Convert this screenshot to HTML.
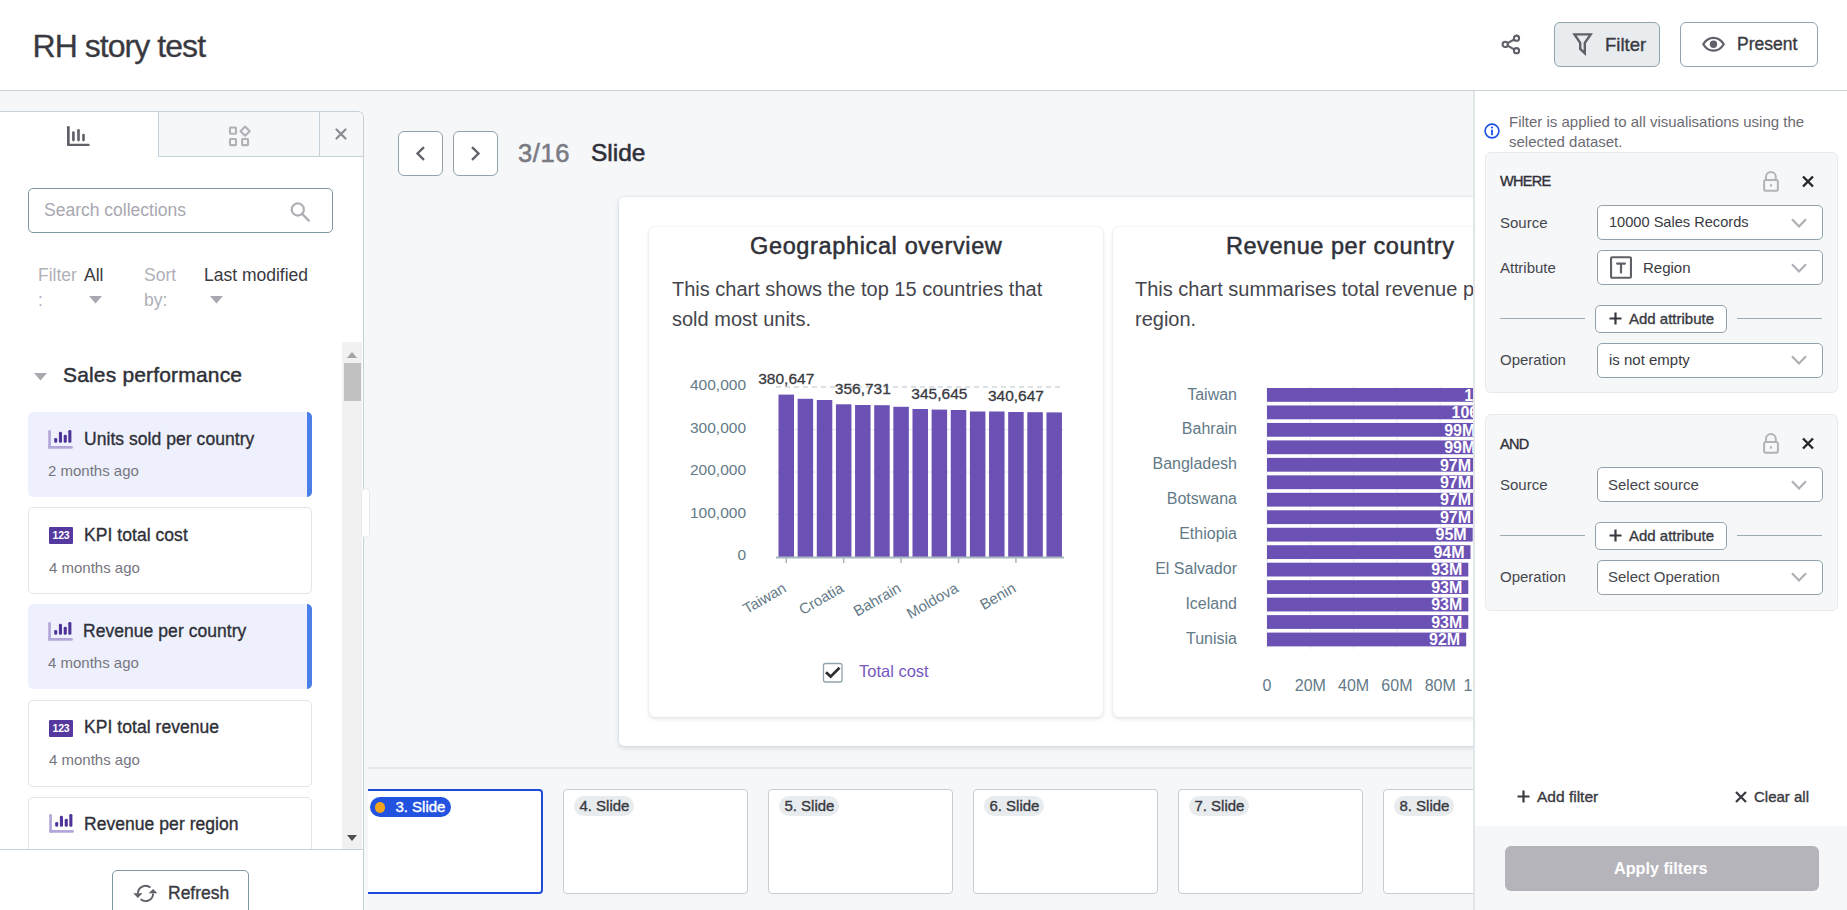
<!DOCTYPE html>
<html><head><meta charset="utf-8">
<style>
*{box-sizing:border-box;margin:0;padding:0}
html,body{width:1847px;height:910px;overflow:hidden;background:#f5f7f9;font-family:"Liberation Sans",sans-serif;color:#393a41}
.abs{position:absolute}
.t{position:absolute;white-space:nowrap;line-height:1}
#header{position:absolute;left:0;top:0;width:1847px;height:91px;background:#fff;border-bottom:1px solid #c9d4da}
.btn{position:absolute;border:1px solid #8fa4ae;border-radius:6px;background:#fff}
svg{position:absolute;overflow:visible}
.m{-webkit-text-stroke:0.35px currentColor}
.sel{background:#fff;border:1px solid #8ea2ad;border-radius:5px}
.addb{background:#fff;border:1px solid #8ea2ad;border-radius:5px}
</style></head><body>

<!-- HEADER -->
<div id="header">
  <div class="t m" style="left:32.5px;top:29.5px;font-size:32px;letter-spacing:-0.95px;color:#393a41;-webkit-text-stroke:0.3px #393a41">RH story test</div>
  <!-- share -->
  <svg style="left:1500px;top:33px" width="22" height="22" viewBox="0 0 22 22">
    <g fill="none" stroke="#5f6068" stroke-width="2.1">
      <circle cx="16.5" cy="5.2" r="2.6"/><circle cx="5.2" cy="11.4" r="2.6"/><circle cx="16.5" cy="17.7" r="2.6"/>
      <path d="M7.5 10.1L14.2 6.5M7.5 12.7L14.2 16.4"/>
    </g>
  </svg>
  <div class="btn" style="left:1554px;top:22px;width:106px;height:45px;background:#e8ecef"></div>
  <svg style="left:1572px;top:33px" width="22" height="23" viewBox="0 0 22 23">
    <path d="M2.5 1.4H18.7L12.8 9.8V20.3L8.2 16V9.8Z" fill="none" stroke="#5f6068" stroke-width="2.4" stroke-linejoin="miter"/>
  </svg>
  <div class="t m" style="left:1605px;top:36px;font-size:18.5px;color:#393a41">Filter</div>
  <div class="btn" style="left:1680px;top:22px;width:138px;height:45px"></div>
  <svg style="left:1702px;top:36px" width="24" height="17" viewBox="0 0 24 17">
    <path d="M1.3 8.3C4 3.7 7.8 1.9 11.5 1.9S19 3.7 21.7 8.3C19 12.9 15.2 14.7 11.5 14.7S4 12.9 1.3 8.3Z" fill="none" stroke="#5f6068" stroke-width="2.2"/>
    <circle cx="11.5" cy="8.3" r="3.7" fill="#5f6068"/>
  </svg>
  <div class="t m" style="left:1737px;top:36px;font-size:17.5px;color:#393a41">Present</div>
</div>

<!-- LEFT PANEL -->
<div id="left" class="abs" style="left:0;top:111px;width:364px;height:799px;background:#fff;border:1px solid #c5d1d8;border-left:none;border-bottom:none;border-top-right-radius:6px;overflow:hidden">
  <!-- tabs (coords relative to panel: top=111) -->
  <div class="abs" style="left:158px;top:0;width:205px;height:45px;background:#f5f7f9;border-left:1px solid #c5d1d8;border-bottom:1px solid #c5d1d8"></div>
  <div class="abs" style="left:319px;top:0;width:1px;height:45px;background:#c5d1d8"></div>
  <svg style="left:67px;top:14px" width="23" height="21" viewBox="0 0 23 21">
    <g fill="#5f6068"><rect x="0" y="0" width="2.7" height="20" rx="1.2"/><rect x="0" y="17.8" width="22.7" height="2.3" rx="1.1"/>
    <rect x="5.1" y="5.2" width="2.6" height="10.2" rx="1.3"/><rect x="10.2" y="2.9" width="2.6" height="12.5" rx="1.3"/><rect x="15.2" y="7.8" width="2.6" height="7.6" rx="1.3"/></g>
  </svg>
  <svg style="left:229px;top:14px" width="22" height="22" viewBox="0 0 22 22">
    <g fill="none" stroke="#b1b1b7" stroke-width="2.1" stroke-linejoin="round">
      <rect x="1" y="1.5" width="6" height="6.2" rx="0.6"/><rect x="1" y="13" width="6" height="6.1" rx="0.6"/><rect x="13.1" y="13" width="5.9" height="6.1" rx="0.6"/>
      <path d="M16.1 0.6L20.7 5.2L16.1 9.8L11.5 5.2Z"/>
    </g>
  </svg>
  <svg style="left:335px;top:16px" width="12" height="12" viewBox="0 0 12 12">
    <path d="M1.5 1.5L10.5 10.5M10.5 1.5L1.5 10.5" stroke="#8a8b93" stroke-width="2.2" stroke-linecap="round" fill="none"/>
  </svg>
  <!-- search -->
  <div class="abs" style="left:28px;top:75.5px;width:305px;height:45px;border:1px solid #7e98a5;border-radius:5px"></div>
  <div class="t" style="left:44px;top:90px;font-size:17.5px;color:#a8a8b0">Search collections</div>
  <svg style="left:290px;top:91px" width="20" height="20" viewBox="0 0 20 20">
    <circle cx="7.8" cy="6.5" r="6.1" fill="none" stroke="#afafb5" stroke-width="2.2"/><path d="M12.2 10.9L18.8 17.6" stroke="#afafb5" stroke-width="2.3" stroke-linecap="round"/>
  </svg>
  <!-- filter/sort -->
  <div class="t" style="left:38px;top:155px;font-size:17.5px;color:#b0b0b8">Filter</div>
  <div class="t" style="left:38px;top:180px;font-size:17.5px;color:#b0b0b8">:</div>
  <div class="t" style="left:84px;top:155px;font-size:17.5px;color:#393a41">All</div>
  <svg style="left:89px;top:184px" width="13" height="8" viewBox="0 0 13 8"><path d="M0 0H13L6.5 7.5Z" fill="#a8a8b0"/></svg>
  <div class="t" style="left:144px;top:155px;font-size:17.5px;color:#b0b0b8">Sort</div>
  <div class="t" style="left:144px;top:180px;font-size:17.5px;color:#b0b0b8">by:</div>
  <div class="t" style="left:204px;top:155px;font-size:17.5px;color:#393a41">Last modified</div>
  <svg style="left:210px;top:184px" width="13" height="8" viewBox="0 0 13 8"><path d="M0 0H13L6.5 7.5Z" fill="#a8a8b0"/></svg>
  <!-- section -->
  <svg style="left:34px;top:261px" width="13" height="8" viewBox="0 0 13 8"><path d="M0 0H13L6.5 7.5Z" fill="#a8a8b0"/></svg>
  <div class="t m" style="left:63px;top:251.5px;font-size:21px;letter-spacing:0.17px;color:#2f3038;-webkit-text-stroke:0.45px #2f3038">Sales performance</div>
  <!-- scrollbar -->
  <div class="abs" style="left:342px;top:230px;width:20px;height:507px;background:#f1f1f1"></div>
  <svg style="left:347px;top:240px" width="10" height="6" viewBox="0 0 10 6"><path d="M0 6H10L5 0Z" fill="#a3a3a3"/></svg>
  <div class="abs" style="left:344px;top:251px;width:17px;height:38px;background:#c1c1c1"></div>
  <svg style="left:347px;top:723px" width="10" height="6" viewBox="0 0 10 6"><path d="M0 0H10L5 6Z" fill="#505050"/></svg>
  <!-- list items -->
  <div class="abs" style="left:28px;top:300px;width:284px;height:85px;background:#eef1fd;border-radius:5px;border-right:5px solid #4a7ee9"></div>
  <div class="abs" style="left:28px;top:395px;width:284px;height:87px;border:1px solid #dfe5e8;border-radius:5px"></div>
  <div class="abs" style="left:28px;top:492px;width:284px;height:85px;background:#eef1fd;border-radius:5px;border-right:5px solid #4a7ee9"></div>
  <div class="abs" style="left:28px;top:588px;width:284px;height:87px;border:1px solid #dfe5e8;border-radius:5px"></div>
  <div class="abs" style="left:28px;top:685px;width:284px;height:60px;border:1px solid #dfe5e8;border-radius:5px"></div>

  <svg class="ci" style="left:48px;top:317px" width="25" height="19" viewBox="0 0 25 19">
    <rect x="0.2" y="0.9" width="2.7" height="18.8" rx="1.3" fill="#b3a6d8"/><rect x="0.2" y="16.9" width="24.7" height="2.8" rx="1.3" fill="#b3a6d8"/>
    <g fill="#4f3499"><rect x="6.2" y="8.9" width="3" height="4.9" rx="1.4"/><rect x="10.9" y="2.8" width="3.1" height="11" rx="1.4"/><rect x="15.7" y="5.8" width="3.1" height="8" rx="1.4"/><rect x="20.3" y="0.9" width="3.1" height="12.9" rx="1.4"/></g>
  </svg>
  <div class="t m" style="left:84px;top:319px;font-size:17.5px;letter-spacing:0.05px;color:#2f3038">Units sold per country</div>
  <div class="t" style="left:48px;top:351px;font-size:15px;color:#76767e">2 months ago</div>

  <svg style="left:49px;top:415px" width="24" height="17" viewBox="0 0 24 17">
    <rect width="24" height="17" rx="1.1" fill="#55399e"/><text x="12" y="12.1" text-anchor="middle" font-family="Liberation Sans" font-size="10.5" font-weight="700" letter-spacing="-0.2" fill="#fff">123</text>
  </svg>
  <div class="t m" style="left:84px;top:415px;font-size:17.5px;letter-spacing:0.05px;color:#2f3038">KPI total cost</div>
  <div class="t" style="left:49px;top:448px;font-size:15px;color:#76767e">4 months ago</div>

  <svg style="left:48px;top:509px" width="25" height="19" viewBox="0 0 25 19">
    <rect x="0.2" y="0.9" width="2.7" height="18.8" rx="1.3" fill="#b3a6d8"/><rect x="0.2" y="16.9" width="24.7" height="2.8" rx="1.3" fill="#b3a6d8"/>
    <g fill="#4f3499"><rect x="6.2" y="8.9" width="3" height="4.9" rx="1.4"/><rect x="10.9" y="2.8" width="3.1" height="11" rx="1.4"/><rect x="15.7" y="5.8" width="3.1" height="8" rx="1.4"/><rect x="20.3" y="0.9" width="3.1" height="12.9" rx="1.4"/></g>
  </svg>
  <div class="t m" style="left:83px;top:511px;font-size:17.5px;letter-spacing:0.05px;color:#2f3038">Revenue per country</div>
  <div class="t" style="left:48px;top:543px;font-size:15px;color:#76767e">4 months ago</div>

  <svg style="left:49px;top:608px" width="24" height="17" viewBox="0 0 24 17">
    <rect width="24" height="17" rx="1.1" fill="#55399e"/><text x="12" y="12.1" text-anchor="middle" font-family="Liberation Sans" font-size="10.5" font-weight="700" letter-spacing="-0.2" fill="#fff">123</text>
  </svg>
  <div class="t m" style="left:84px;top:607px;font-size:17.5px;letter-spacing:0.05px;color:#2f3038">KPI total revenue</div>
  <div class="t" style="left:49px;top:640px;font-size:15px;color:#76767e">4 months ago</div>

  <svg style="left:49px;top:701px" width="25" height="19" viewBox="0 0 25 19">
    <rect x="0.2" y="0.9" width="2.7" height="18.8" rx="1.3" fill="#b3a6d8"/><rect x="0.2" y="16.9" width="24.7" height="2.8" rx="1.3" fill="#b3a6d8"/>
    <g fill="#4f3499"><rect x="6.2" y="8.9" width="3" height="4.9" rx="1.4"/><rect x="10.9" y="2.8" width="3.1" height="11" rx="1.4"/><rect x="15.7" y="5.8" width="3.1" height="8" rx="1.4"/><rect x="20.3" y="0.9" width="3.1" height="12.9" rx="1.4"/></g>
  </svg>
  <div class="t m" style="left:84px;top:704px;font-size:17.5px;letter-spacing:0.05px;color:#2f3038">Revenue per region</div>

  <!-- bottom -->
  <div class="abs" style="left:0;top:737px;width:363px;height:62px;background:#fff;border-top:1px solid #c5d1d8"></div>
  <div class="abs" style="left:112px;top:758px;width:137px;height:50px;border:1px solid #7e98a5;border-radius:5px"></div>
  <svg style="left:128px;top:765px" width="36" height="30" viewBox="0 0 36 30">
    <g fill="none" stroke="#5f6068" stroke-width="1.9"><path d="M22.4 10.6A7.6 7.6 0 0 0 9.9 16.4"/><path d="M12.6 22.2A7.6 7.6 0 0 0 25.1 16.4"/></g>
    <path d="M5.3 16.3H14.5L9.9 20.9Z" fill="#5f6068"/><path d="M20.6 16.3H29.4L25.1 11.9Z" fill="#5f6068"/>
  </svg>
  <div class="t m" style="left:168px;top:773px;font-size:17.5px;color:#393a41">Refresh</div>
</div>
<!-- resize handle -->
<div class="abs" style="left:361px;top:488px;width:9px;height:50px;background:#fff;border:1px solid #e4e8eb;border-radius:5px"></div>

<!-- CENTER -->
<div id="center">
  <div class="btn" style="left:398px;top:131px;width:45px;height:45px"></div>
  <svg style="left:415px;top:146px" width="11" height="15" viewBox="0 0 11 15"><path d="M9 1.2L2.5 7.5L9 13.8" fill="none" stroke="#5f6068" stroke-width="2.3"/></svg>
  <div class="btn" style="left:453px;top:131px;width:45px;height:45px"></div>
  <svg style="left:470px;top:146px" width="11" height="15" viewBox="0 0 11 15"><path d="M2 1.2L8.5 7.5L2 13.8" fill="none" stroke="#5f6068" stroke-width="2.3"/></svg>
  <div class="t m" style="left:518px;top:141.3px;font-size:25.5px;letter-spacing:0.6px;color:#7a7a82;-webkit-text-stroke:0.55px #7a7a82">3/16</div>
  <div class="t m" style="left:591px;top:141.3px;font-size:24.5px;color:#2f3038;-webkit-text-stroke:0.55px #2f3038">Slide</div>

  <!-- slide card -->
  <div class="abs" style="left:618.5px;top:196.5px;width:900px;height:549.5px;background:#fff;border-radius:5px;box-shadow:0 2px 5px rgba(60,80,100,0.17),0 0 1.5px rgba(60,80,100,0.22)"></div>

  <!-- chart card 1 -->
  <div class="abs" style="left:649px;top:226.5px;width:454px;height:490px;background:#fff;border-radius:6px;box-shadow:0 2px 4px rgba(60,80,100,0.13),0 0 1.5px rgba(60,80,100,0.2)"></div>
  <div class="t m" style="left:750px;top:234.5px;font-size:23.5px;letter-spacing:0.64px;color:#2f3038;-webkit-text-stroke:0.5px #2f3038">Geographical overview</div>
  <div class="t" style="left:672px;top:274px;font-size:20px;line-height:30px;color:#44454c">This chart shows the top 15 countries that<br>sold most units.</div>

  <svg id="ch1" style="left:649px;top:226px" width="454" height="491" viewBox="649 226 454 491"><g font-family="Liberation Sans"><text x="746" y="390.2" text-anchor="end" font-size="15.5" fill="#637a88">400,000</text><text x="746" y="432.7" text-anchor="end" font-size="15.5" fill="#637a88">300,000</text><text x="746" y="475.2" text-anchor="end" font-size="15.5" fill="#637a88">200,000</text><text x="746" y="517.7" text-anchor="end" font-size="15.5" fill="#637a88">100,000</text><text x="746" y="560.2" text-anchor="end" font-size="15.5" fill="#637a88">0</text><path d="M776 387H1064" stroke="#cfd9de" stroke-width="1.3" stroke-dasharray="5 4"/><path d="M776 429.5H1064" stroke="#e4e9ec" stroke-width="1"/><path d="M776 472H1064" stroke="#e4e9ec" stroke-width="1"/><path d="M776 514.5H1064" stroke="#e4e9ec" stroke-width="1"/><rect x="778.50" y="394.6" width="15.5" height="162.4" fill="#6c51b5"/><rect x="797.64" y="398.8" width="15.5" height="158.2" fill="#6c51b5"/><rect x="816.78" y="400" width="15.5" height="157.0" fill="#6c51b5"/><rect x="835.92" y="404.3" width="15.5" height="152.7" fill="#6c51b5"/><rect x="855.06" y="405" width="15.5" height="152.0" fill="#6c51b5"/><rect x="874.20" y="405.2" width="15.5" height="151.8" fill="#6c51b5"/><rect x="893.34" y="406.8" width="15.5" height="150.2" fill="#6c51b5"/><rect x="912.48" y="409" width="15.5" height="148.0" fill="#6c51b5"/><rect x="931.62" y="409.6" width="15.5" height="147.4" fill="#6c51b5"/><rect x="950.76" y="410" width="15.5" height="147.0" fill="#6c51b5"/><rect x="969.90" y="411.5" width="15.5" height="145.5" fill="#6c51b5"/><rect x="989.04" y="411.5" width="15.5" height="145.5" fill="#6c51b5"/><rect x="1008.18" y="412" width="15.5" height="145.0" fill="#6c51b5"/><rect x="1027.32" y="412.2" width="15.5" height="144.8" fill="#6c51b5"/><rect x="1046.46" y="412.4" width="15.5" height="144.6" fill="#6c51b5"/><path d="M776 557.5H1064" stroke="#a9b8c0" stroke-width="2"/><path d="M786.25 557V563" stroke="#a9b8c0" stroke-width="1.5"/><text x="787.25" y="591" text-anchor="end" font-size="15" fill="#637a88" transform="rotate(-30 787.25 591)">Taiwan</text><path d="M843.67 557V563" stroke="#a9b8c0" stroke-width="1.5"/><text x="844.67" y="591" text-anchor="end" font-size="15" fill="#637a88" transform="rotate(-30 844.67 591)">Croatia</text><path d="M901.09 557V563" stroke="#a9b8c0" stroke-width="1.5"/><text x="902.09" y="591" text-anchor="end" font-size="15" fill="#637a88" transform="rotate(-30 902.09 591)">Bahrain</text><path d="M958.51 557V563" stroke="#a9b8c0" stroke-width="1.5"/><text x="959.51" y="591" text-anchor="end" font-size="15" fill="#637a88" transform="rotate(-30 959.51 591)">Moldova</text><path d="M1015.93 557V563" stroke="#a9b8c0" stroke-width="1.5"/><text x="1016.93" y="591" text-anchor="end" font-size="15" fill="#637a88" transform="rotate(-30 1016.93 591)">Benin</text><text x="786.25" y="383.6" text-anchor="middle" font-size="15.5" fill="#38393f" stroke="#38393f" stroke-width="0.3">380,647</text><text x="862.81" y="394.0" text-anchor="middle" font-size="15.5" fill="#38393f" stroke="#38393f" stroke-width="0.3">356,731</text><text x="939.37" y="398.6" text-anchor="middle" font-size="15.5" fill="#38393f" stroke="#38393f" stroke-width="0.3">345,645</text><text x="1015.93" y="401.0" text-anchor="middle" font-size="15.5" fill="#38393f" stroke="#38393f" stroke-width="0.3">340,647</text><rect x="823.5" y="663.5" width="18.5" height="18.5" rx="2" fill="#fff" stroke="#90a4ae" stroke-width="1.3"/><path d="M826 672.3L830.6 676.6L839.5 667.8" fill="none" stroke="#2c2d33" stroke-width="2.7"/><text x="859" y="676.7" font-size="16.5" fill="#7658bf">Total cost</text></g></svg>

  <!-- chart card 2 -->
  <div class="abs" style="left:1113px;top:226.5px;width:454px;height:490px;background:#fff;border-radius:6px;box-shadow:0 2px 4px rgba(60,80,100,0.13),0 0 1.5px rgba(60,80,100,0.2)"></div>
  <div class="t m" style="left:1226px;top:234.5px;font-size:23.5px;letter-spacing:0.54px;color:#2f3038;-webkit-text-stroke:0.5px #2f3038">Revenue per country</div>
  <div class="t" style="left:1135px;top:274px;font-size:20px;line-height:30px;color:#44454c">This chart summarises total revenue per<br>region.</div>
  <svg id="ch2" style="left:1113px;top:226px" width="454" height="491" viewBox="1113 226 454 491"><g font-family="Liberation Sans"><path d="M1267.0 386V649" stroke="#e6eaed" stroke-width="1"/><text x="1267.0" y="690.8" text-anchor="middle" font-size="16" fill="#637a88">0</text><path d="M1310.3 386V649" stroke="#e6eaed" stroke-width="1"/><text x="1310.3" y="690.8" text-anchor="middle" font-size="16" fill="#637a88">20M</text><path d="M1353.6 386V649" stroke="#e6eaed" stroke-width="1"/><text x="1353.6" y="690.8" text-anchor="middle" font-size="16" fill="#637a88">40M</text><path d="M1396.9 386V649" stroke="#e6eaed" stroke-width="1"/><text x="1396.9" y="690.8" text-anchor="middle" font-size="16" fill="#637a88">60M</text><path d="M1440.2 386V649" stroke="#e6eaed" stroke-width="1"/><text x="1440.2" y="690.8" text-anchor="middle" font-size="16" fill="#637a88">80M</text><path d="M1483.5 386V649" stroke="#e6eaed" stroke-width="1"/><text x="1483.5" y="690.8" text-anchor="middle" font-size="16" fill="#637a88">100M</text><rect x="1267" y="388.00" width="241.4" height="13.8" fill="#6c51b5"/><text x="1502.4" y="400.6" text-anchor="end" font-size="16" font-weight="700" fill="#fff">111M</text><text x="1237" y="399.5" text-anchor="end" font-size="16" fill="#637a88">Taiwan</text><rect x="1267" y="405.47" width="230.6" height="13.8" fill="#6c51b5"/><text x="1491.6" y="418.1" text-anchor="end" font-size="16" font-weight="700" fill="#fff">106M</text><rect x="1267" y="422.94" width="214.3" height="13.8" fill="#6c51b5"/><text x="1475.3" y="435.5" text-anchor="end" font-size="16" font-weight="700" fill="#fff">99M</text><text x="1237" y="434.4" text-anchor="end" font-size="16" fill="#637a88">Bahrain</text><rect x="1267" y="440.41" width="214.3" height="13.8" fill="#6c51b5"/><text x="1475.3" y="453.0" text-anchor="end" font-size="16" font-weight="700" fill="#fff">99M</text><rect x="1267" y="457.88" width="210.0" height="13.8" fill="#6c51b5"/><text x="1471.0" y="470.5" text-anchor="end" font-size="16" font-weight="700" fill="#fff">97M</text><text x="1237" y="469.4" text-anchor="end" font-size="16" fill="#637a88">Bangladesh</text><rect x="1267" y="475.35" width="210.0" height="13.8" fill="#6c51b5"/><text x="1471.0" y="488.0" text-anchor="end" font-size="16" font-weight="700" fill="#fff">97M</text><rect x="1267" y="492.82" width="210.0" height="13.8" fill="#6c51b5"/><text x="1471.0" y="505.4" text-anchor="end" font-size="16" font-weight="700" fill="#fff">97M</text><text x="1237" y="504.3" text-anchor="end" font-size="16" fill="#637a88">Botswana</text><rect x="1267" y="510.29" width="210.0" height="13.8" fill="#6c51b5"/><text x="1471.0" y="522.9" text-anchor="end" font-size="16" font-weight="700" fill="#fff">97M</text><rect x="1267" y="527.76" width="205.7" height="13.8" fill="#6c51b5"/><text x="1466.7" y="540.4" text-anchor="end" font-size="16" font-weight="700" fill="#fff">95M</text><text x="1237" y="539.3" text-anchor="end" font-size="16" fill="#637a88">Ethiopia</text><rect x="1267" y="545.23" width="203.5" height="13.8" fill="#6c51b5"/><text x="1464.5" y="557.8" text-anchor="end" font-size="16" font-weight="700" fill="#fff">94M</text><rect x="1267" y="562.70" width="201.3" height="13.8" fill="#6c51b5"/><text x="1462.3" y="575.3" text-anchor="end" font-size="16" font-weight="700" fill="#fff">93M</text><text x="1237" y="574.2" text-anchor="end" font-size="16" fill="#637a88">El Salvador</text><rect x="1267" y="580.17" width="201.3" height="13.8" fill="#6c51b5"/><text x="1462.3" y="592.8" text-anchor="end" font-size="16" font-weight="700" fill="#fff">93M</text><rect x="1267" y="597.64" width="201.3" height="13.8" fill="#6c51b5"/><text x="1462.3" y="610.2" text-anchor="end" font-size="16" font-weight="700" fill="#fff">93M</text><text x="1237" y="609.1" text-anchor="end" font-size="16" fill="#637a88">Iceland</text><rect x="1267" y="615.11" width="201.3" height="13.8" fill="#6c51b5"/><text x="1462.3" y="627.7" text-anchor="end" font-size="16" font-weight="700" fill="#fff">93M</text><rect x="1267" y="632.58" width="199.2" height="13.8" fill="#6c51b5"/><text x="1460.2" y="645.2" text-anchor="end" font-size="16" font-weight="700" fill="#fff">92M</text><text x="1237" y="644.1" text-anchor="end" font-size="16" fill="#637a88">Tunisia</text></g></svg>

  <!-- strip -->
  <div class="abs" style="left:368px;top:767px;width:1106px;height:2px;background:#e4e8eb"></div>
  <div id="strip" class="abs" style="left:368px;top:769px;width:1109px;height:141px;overflow:hidden"><div class="abs" style="left:-9.6px;top:20px;width:185px;height:105px;background:#fff;border:2px solid #1c4ad9;border-radius:4px"></div><div class="abs" style="left:1.7px;top:28px;width:81px;height:20px;background:#2152e0;border-radius:10px"></div><div class="abs" style="left:6.9px;top:33px;width:10.5px;height:10.5px;background:#f5a41f;border-radius:50%"></div><div class="t m" style="left:27.4px;top:30px;font-size:15px;color:#fff;-webkit-text-stroke:0.4px #fff">3. Slide</div><div class="abs" style="left:195.4px;top:20px;width:185px;height:105px;background:#fff;border:1px solid #c6ced4;border-radius:4px"></div><div class="abs" style="left:205.8px;top:27px;width:60px;height:20px;background:#e8ecef;border-radius:10px"></div><div class="t m" style="left:211.4px;top:29px;font-size:15px;color:#393a41">4. Slide</div><div class="abs" style="left:400.4px;top:20px;width:185px;height:105px;background:#fff;border:1px solid #c6ced4;border-radius:4px"></div><div class="abs" style="left:410.8px;top:27px;width:60px;height:20px;background:#e8ecef;border-radius:10px"></div><div class="t m" style="left:416.4px;top:29px;font-size:15px;color:#393a41">5. Slide</div><div class="abs" style="left:605.4px;top:20px;width:185px;height:105px;background:#fff;border:1px solid #c6ced4;border-radius:4px"></div><div class="abs" style="left:615.8px;top:27px;width:60px;height:20px;background:#e8ecef;border-radius:10px"></div><div class="t m" style="left:621.4px;top:29px;font-size:15px;color:#393a41">6. Slide</div><div class="abs" style="left:810.4px;top:20px;width:185px;height:105px;background:#fff;border:1px solid #c6ced4;border-radius:4px"></div><div class="abs" style="left:820.8px;top:27px;width:60px;height:20px;background:#e8ecef;border-radius:10px"></div><div class="t m" style="left:826.4px;top:29px;font-size:15px;color:#393a41">7. Slide</div><div class="abs" style="left:1015.4px;top:20px;width:185px;height:105px;background:#fff;border:1px solid #c6ced4;border-radius:4px"></div><div class="abs" style="left:1025.8px;top:27px;width:60px;height:20px;background:#e8ecef;border-radius:10px"></div><div class="t m" style="left:1031.4px;top:29px;font-size:15px;color:#393a41">8. Slide</div></div>
</div>

<!-- RIGHT PANEL -->
<div id="right" class="abs" style="left:1473px;top:91px;width:374px;height:819px;background:#fff;border-left:2px solid #e1e6e9"></div>
<div id="rp">
  <svg style="left:1484px;top:123.4px" width="16" height="16" viewBox="0 0 16 16">
    <circle cx="8" cy="8" r="6.9" fill="none" stroke="#2152e8" stroke-width="1.6"/>
    <rect x="7.1" y="6.6" width="1.8" height="5.6" fill="#2152e8"/><circle cx="8" cy="4.5" r="1.1" fill="#2152e8"/>
  </svg>
  <div class="t" style="left:1509px;top:111.5px;font-size:15px;line-height:20px;color:#6b6b73">Filter is applied to all visualisations using the<br>selected dataset.</div>

  <!-- WHERE box -->
  <div class="abs" style="left:1485px;top:152px;width:353px;height:241px;background:#f5f7f9;border:1px solid #e6eaed;border-radius:6px"></div>
  <div class="t m" style="left:1500px;top:174px;font-size:14.5px;letter-spacing:-0.7px;color:#2f3038">WHERE</div>
  <svg class="lock" style="left:1762px;top:171px" width="18" height="21" viewBox="0 0 18 21">
    <path d="M4 9V6A4.9 4.9 0 0 1 13.8 6V9" fill="none" stroke="#b3b3b8" stroke-width="2"/>
    <rect x="2.1" y="9" width="13.8" height="10.7" rx="1.8" fill="none" stroke="#b3b3b8" stroke-width="2"/>
    <rect x="8" y="12.9" width="1.9" height="2.9" rx="0.9" fill="#b3b3b8"/>
  </svg>
  <svg style="left:1802px;top:176px" width="12" height="11" viewBox="0 0 12 11"><path d="M1 0.5L11 10.5M11 0.5L1 10.5" stroke="#26262b" stroke-width="2.4"/></svg>

  <div class="t" style="left:1500px;top:215px;font-size:15px;color:#45464d">Source</div>
  <div class="abs sel" style="left:1597px;top:205px;width:226px;height:35px"></div>
  <div class="t" style="left:1609px;top:215px;font-size:14.6px;color:#393a41">10000 Sales Records</div>
  <svg class="chev" style="left:1791px;top:218px" width="16" height="10" viewBox="0 0 16 10"><path d="M1 1.2L8 8.5L15 1.2" fill="none" stroke="#afafb5" stroke-width="2.2"/></svg>

  <div class="t" style="left:1500px;top:260px;font-size:15px;color:#45464d">Attribute</div>
  <div class="abs sel" style="left:1597px;top:250px;width:226px;height:35px"></div>
  <svg style="left:1609px;top:256px" width="24" height="24" viewBox="0 0 24 24">
    <rect x="2.05" y="1.25" width="19.9" height="20.5" rx="1" fill="none" stroke="#5f6068" stroke-width="2.1"/>
    <path d="M8.1 7.6H15.9M12 7.6V16.6" stroke="#5f6068" stroke-width="2.2" stroke-linecap="round"/>
  </svg>
  <div class="t" style="left:1643px;top:260px;font-size:15px;color:#393a41">Region</div>
  <svg class="chev" style="left:1791px;top:263px" width="16" height="10" viewBox="0 0 16 10"><path d="M1 1.2L8 8.5L15 1.2" fill="none" stroke="#afafb5" stroke-width="2.2"/></svg>

  <div class="abs" style="left:1500px;top:318px;width:85px;height:1px;background:#9aabb4"></div>
  <div class="abs" style="left:1737px;top:318px;width:85px;height:1px;background:#9aabb4"></div>
  <div class="abs addb" style="left:1595px;top:305px;width:132px;height:28px"></div>
  <svg style="left:1609px;top:312px" width="13" height="13" viewBox="0 0 13 13"><path d="M6.5 0.5V12.5M0.5 6.5H12.5" stroke="#393a41" stroke-width="2.2"/></svg>
  <div class="t m" style="left:1629px;top:311px;font-size:15px;color:#393a41">Add attribute</div>

  <div class="t" style="left:1500px;top:352px;font-size:15px;color:#45464d">Operation</div>
  <div class="abs sel" style="left:1597px;top:343px;width:226px;height:35px"></div>
  <div class="t" style="left:1609px;top:352px;font-size:15px;color:#393a41">is not empty</div>
  <svg class="chev" style="left:1791px;top:355px" width="16" height="10" viewBox="0 0 16 10"><path d="M1 1.2L8 8.5L15 1.2" fill="none" stroke="#afafb5" stroke-width="2.2"/></svg>

  <!-- AND box -->
  <div class="abs" style="left:1485px;top:414px;width:353px;height:197px;background:#f5f7f9;border:1px solid #e6eaed;border-radius:6px"></div>
  <div class="t m" style="left:1500px;top:437px;font-size:14.5px;letter-spacing:-0.7px;color:#2f3038">AND</div>
  <svg style="left:1762px;top:433px" width="18" height="21" viewBox="0 0 18 21">
    <path d="M4 9V6A4.9 4.9 0 0 1 13.8 6V9" fill="none" stroke="#b3b3b8" stroke-width="2"/>
    <rect x="2.1" y="9" width="13.8" height="10.7" rx="1.8" fill="none" stroke="#b3b3b8" stroke-width="2"/>
    <rect x="8" y="12.9" width="1.9" height="2.9" rx="0.9" fill="#b3b3b8"/>
  </svg>
  <svg style="left:1802px;top:438px" width="12" height="11" viewBox="0 0 12 11"><path d="M1 0.5L11 10.5M11 0.5L1 10.5" stroke="#26262b" stroke-width="2.4"/></svg>

  <div class="t" style="left:1500px;top:477px;font-size:15px;color:#45464d">Source</div>
  <div class="abs sel" style="left:1597px;top:467px;width:226px;height:35px"></div>
  <div class="t" style="left:1608px;top:477px;font-size:15px;color:#45464d">Select source</div>
  <svg class="chev" style="left:1791px;top:480px" width="16" height="10" viewBox="0 0 16 10"><path d="M1 1.2L8 8.5L15 1.2" fill="none" stroke="#afafb5" stroke-width="2.2"/></svg>

  <div class="abs" style="left:1500px;top:535px;width:85px;height:1px;background:#9aabb4"></div>
  <div class="abs" style="left:1737px;top:535px;width:85px;height:1px;background:#9aabb4"></div>
  <div class="abs addb" style="left:1595px;top:522px;width:132px;height:28px"></div>
  <svg style="left:1609px;top:529px" width="13" height="13" viewBox="0 0 13 13"><path d="M6.5 0.5V12.5M0.5 6.5H12.5" stroke="#393a41" stroke-width="2.2"/></svg>
  <div class="t m" style="left:1629px;top:528px;font-size:15px;color:#393a41">Add attribute</div>

  <div class="t" style="left:1500px;top:569px;font-size:15px;color:#45464d">Operation</div>
  <div class="abs sel" style="left:1597px;top:560px;width:226px;height:35px"></div>
  <div class="t" style="left:1608px;top:569px;font-size:15px;color:#45464d">Select Operation</div>
  <svg class="chev" style="left:1791px;top:572px" width="16" height="10" viewBox="0 0 16 10"><path d="M1 1.2L8 8.5L15 1.2" fill="none" stroke="#afafb5" stroke-width="2.2"/></svg>

  <!-- footer -->
  <svg style="left:1517px;top:790px" width="13" height="13" viewBox="0 0 13 13"><path d="M6.5 0.5V12.5M0.5 6.5H12.5" stroke="#393a41" stroke-width="2.2"/></svg>
  <div class="t m" style="left:1537px;top:789px;font-size:15.5px;color:#393a41">Add filter</div>
  <svg style="left:1735px;top:791px" width="12" height="12" viewBox="0 0 12 12"><path d="M1 1L11 11M11 1L1 11" stroke="#393a41" stroke-width="2.2"/></svg>
  <div class="t m" style="left:1754px;top:789px;font-size:15px;color:#393a41">Clear all</div>

  <div class="abs" style="left:1475px;top:826px;width:372px;height:84px;background:#f5f7f9"></div>
  <div class="abs" style="left:1505px;top:846px;width:314px;height:45px;background:#b5b4ba;border-radius:6px"></div>
  <div class="t" style="left:1614px;top:860px;font-size:16.2px;font-weight:700;color:#fff">Apply filters</div>
</div>

</body></html>
